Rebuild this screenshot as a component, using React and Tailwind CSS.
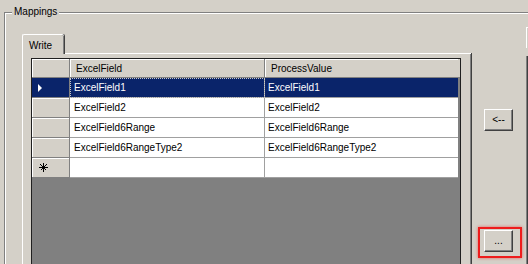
const rows = [
  ['ExcelField1', 'ExcelField1'],
  ['ExcelField2', 'ExcelField2'],
  ['ExcelField6Range', 'ExcelField6Range'],
  ['ExcelField6RangeType2', 'ExcelField6RangeType2'],
];

function Btn({ children }) {
  return (
    <button className="flex h-[22px] w-[29px] items-center justify-center border border-t-white border-l-white border-r-[#404040] border-b-[#404040] bg-[#d4d0c8] text-[10px] leading-none text-black shadow-[inset_-1px_-1px_0_#808080]">
      {children}
    </button>
  );
}

function Star() {
  return (
    <svg width="9" height="9" viewBox="0 0 9 9" stroke="#000" strokeWidth="1" shapeRendering="crispEdges">
      <line x1="4.5" y1="0" x2="4.5" y2="9" />
      <line x1="0" y1="4.5" x2="9" y2="4.5" />
      <line x1="1.5" y1="1.5" x2="7.5" y2="7.5" />
      <line x1="7.5" y1="1.5" x2="1.5" y2="7.5" />
    </svg>
  );
}

export default function App() {
  return (
    <div className="h-[264px] w-[528px] overflow-hidden bg-[#d4d0c8] pl-[4px] pt-[12px] font-['Liberation_Sans',Arial,sans-serif] text-[10px] text-black">
      <div className="relative h-[300px] w-[600px] border-l border-t border-[#808080]">
        <span className="absolute left-[7px] top-[-7px] bg-[#d4d0c8] px-[2px] leading-[12px]">Mappings</span>
        <div className="flex h-full border-l border-t border-white pl-[16px] pt-[20px]">
          {/* tab control */}
          <div className="flex w-[449px] flex-col">
            <div className="flex">
              <div className="relative z-10 -mb-px h-[20px] w-[42px] rounded-t-[2px] border-l border-t border-white bg-[#d4d0c8] pl-[6px] pt-[3px] shadow-[1px_0_0_#404040,inset_-1px_0_0_#808080]">
                Write
              </div>
            </div>
            <div className="h-[230px] border-l border-t border-l-white border-t-white pl-[8px] pt-[4px] shadow-[inset_-1px_0_0_#808080,1px_0_0_#404040]">
              {/* grid */}
              <div className="h-[220px] w-[430px] border border-[#202020] bg-[#808080]">
                <div className="flex h-[19px] border-b border-[#808080] bg-[#d4d0c8]">
                  <div className="w-[38px] border-r border-[#808080] shadow-[inset_1px_1px_0_#fff]" />
                  <div className="flex w-[195px] items-center border-r border-[#808080] pl-[6px] shadow-[inset_1px_1px_0_#fff]">ExcelField</div>
                  <div className="flex w-[193px] items-center pl-[6px] shadow-[inset_1px_1px_0_#fff]">ProcessValue</div>
                </div>
                {rows.map((r, i) => {
                  const sel = i === 0;
                  return (
                    <div key={i} className="flex h-[20px]">
                      <div className={`flex w-[38px] items-center border-b border-r border-[#808080] pl-[6px] ${sel ? 'bg-[#0a246a]' : 'bg-[#d4d0c8] shadow-[inset_1px_1px_0_#fff]'}`}>
                        {sel && <div className="h-0 w-0 border-y-[4px] border-l-[4px] border-y-transparent border-l-white" />}
                      </div>
                      <div className={`flex w-[195px] items-center border-b border-r border-[#a0a0a0] pl-[4px] ${sel ? 'bg-[#0a246a] text-white outline-1 -outline-offset-1 outline-dotted outline-[#c8c8c8]' : 'bg-white'}`}>
                        {r[0]}
                      </div>
                      <div className={`flex w-[193px] items-center border-b border-[#a0a0a0] pl-[3px] ${sel ? 'bg-[#0a246a] text-white' : 'bg-white'}`}>
                        {r[1]}
                      </div>
                    </div>
                  );
                })}
                <div className="flex h-[20px]">
                  <div className="flex w-[38px] items-center border-b border-r border-[#808080] bg-[#d4d0c8] pl-[7px] shadow-[inset_1px_1px_0_#fff]">
                    <Star />
                  </div>
                  <div className="w-[195px] border-b border-r border-[#a0a0a0] bg-white" />
                  <div className="w-[193px] border-b border-[#a0a0a0] bg-white" />
                </div>
              </div>
            </div>
          </div>
          {/* buttons */}
          <div className="ml-[13px] flex flex-col pt-[75px]">
            <Btn>&lt;--</Btn>
            <div className="relative mt-[99px]">
              <Btn>...</Btn>
              <div className="pointer-events-none absolute left-[-6px] top-[-3px] h-[31px] w-[44px] border-2 border-[#ee1c1c] shadow-[0_0_3px_rgba(238,28,28,0.6)]" />
            </div>
          </div>
          <div className="-mt-[7px] ml-[13px] flex flex-col">
            <div className="h-[21px] w-[4px] border-l border-t border-white" />
            <div className="mt-[8px] h-[220px] w-[4px] border-l border-[#808080] shadow-[inset_1px_0_0_#404040]" />
          </div>
        </div>
      </div>
    </div>
  );
}
